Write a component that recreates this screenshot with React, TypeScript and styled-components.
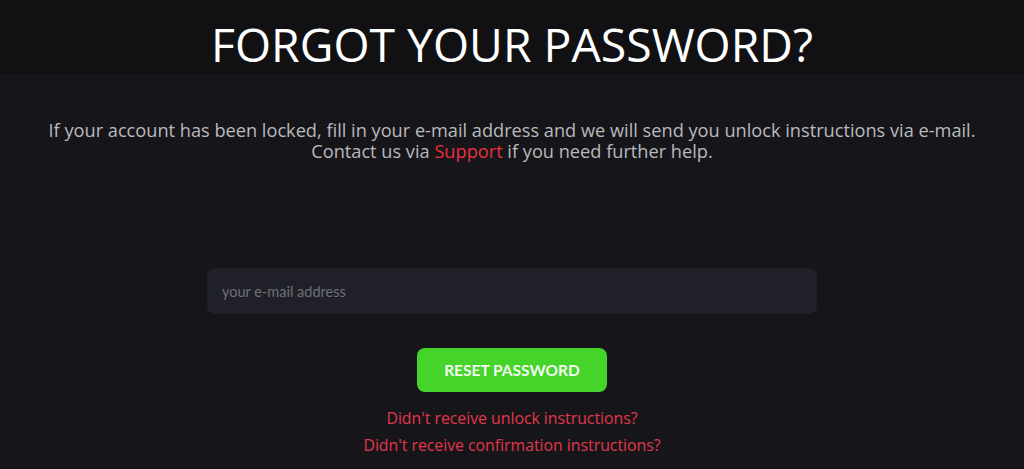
import React from "react";
import styled, { createGlobalStyle } from "styled-components";

const Global = createGlobalStyle`
  html, body { margin: 0; padding: 0; background: #16161a; }
  body { font-family: "Open Sans", "Lato", sans-serif; }
  * { box-sizing: border-box; }
`;

const Page = styled.div`
  width: 1024px;
  height: 469px;
  overflow: hidden;
  background: #16161a;
  display: flex;
  flex-direction: column;
  align-items: center;
`;

const Header = styled.header`
  width: 100%;
  height: 74px;
  background: #111113;
  display: flex;
  justify-content: center;
  padding-top: 19px;
`;

const Title = styled.h1`
  margin: 0;
  font-family: "Open Sans", sans-serif;
  font-weight: 500;
  font-size: 46.4px;
  line-height: 50px;
  color: #ffffff;
`;

const Description = styled.p`
  margin: 46px 0 0;
  text-align: center;
  font-size: 18.2px;
  line-height: 21px;
  color: #b9b9bd;
`;

const Link = styled.a`
  color: #e8303f;
  text-decoration: none;
`;

const Form = styled.form`
  margin-top: 106px;
  display: flex;
  flex-direction: column;
  align-items: center;
`;

const Input = styled.input`
  width: 610px;
  height: 46px;
  border: none;
  border-radius: 8px;
  background: #202128;
  padding: 0 15px;
  font-family: "Lato", sans-serif;
  font-size: 14.5px;
  color: #e0e0e0;
  outline: none;
  &::placeholder { color: #6f7079; }
`;

const Button = styled.button`
  margin-top: 34px;
  width: 190px;
  height: 44px;
  border: none;
  border-radius: 8px;
  background: #45d42a;
  color: #f3fbef;
  font-family: "Lato", sans-serif;
  font-weight: 700;
  font-size: 15.5px;
  cursor: pointer;
`;

const Links = styled.div`
  margin-top: 16px;
  display: flex;
  flex-direction: column;
  align-items: center;
  gap: 6px;
`;

const SubLink = styled.a`
  color: #e2364a;
  font-size: 15.8px;
  line-height: 21px;
  text-decoration: none;
`;

export default function App() {
  return (
    <>
      <Global />
      <Page>
        <Header>
          <Title>FORGOT YOUR PASSWORD?</Title>
        </Header>
        <Description>
          If your account has been locked, fill in your e-mail address and we will send you unlock instructions via e-mail.
          <br />
          Contact us via <Link href="#">Support</Link> if you need further help.
        </Description>
        <Form onSubmit={(e) => e.preventDefault()}>
          <Input type="email" placeholder="your e-mail address" />
          <Button type="submit">RESET PASSWORD</Button>
          <Links>
            <SubLink href="#">Didn't receive unlock instructions?</SubLink>
            <SubLink href="#">Didn't receive confirmation instructions?</SubLink>
          </Links>
        </Form>
      </Page>
    </>
  );
}
